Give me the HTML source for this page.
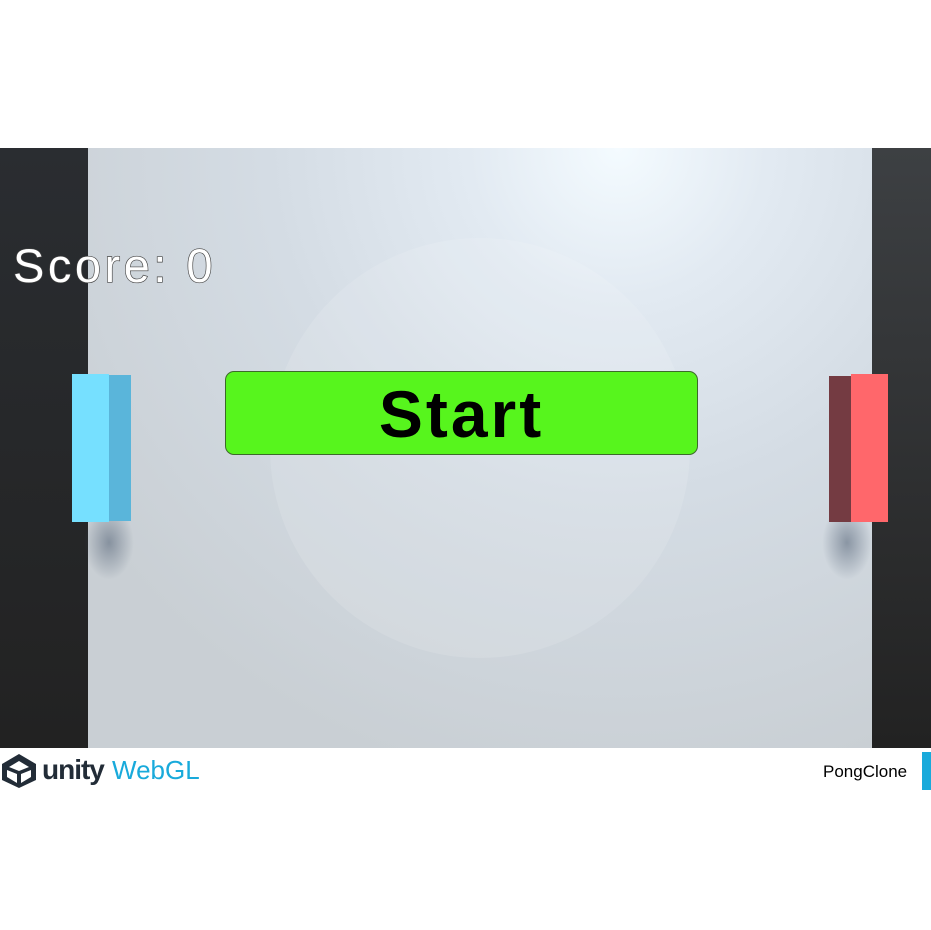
<!DOCTYPE html>
<html><head><style>
body{margin:0;width:931px;height:930px;background:#fff;position:relative;overflow:hidden;font-family:"Liberation Sans",sans-serif}
.a{position:absolute}
</style></head><body>
<div class="a" style="left:0;top:148px;width:931px;height:600px;background:linear-gradient(#2a2d31,#222)"></div>
<div class="a" style="left:872px;top:148px;width:59px;height:600px;background:linear-gradient(#3d4043,#222)"></div>
<div class="a" style="left:88px;top:148px;width:784px;height:600px;background:radial-gradient(circle at 530px 0px,#f4fbff 0,#e2eaf2 150px,#d4dce4 350px,#c9cfd4 650px)"></div>
<div class="a" style="left:270px;top:238px;width:420px;height:420px;border-radius:50%;background:rgba(255,255,255,0.12)"></div>
<div class="a" style="left:13px;top:238px;font-size:47px;color:#fff;letter-spacing:3.5px;-webkit-text-stroke:1.3px #444;paint-order:stroke fill">Score: 0</div>
<div class="a" style="left:84px;top:505px;width:50px;height:75px;background:radial-gradient(ellipse,rgba(80,95,115,0.55),transparent 70%)"></div>
<div class="a" style="left:72px;top:374px;width:37px;height:148px;background:#76e0ff"></div>
<div class="a" style="left:109px;top:375px;width:22px;height:146px;background:#5ab5da"></div>
<div class="a" style="left:822px;top:505px;width:50px;height:75px;background:radial-gradient(ellipse,rgba(80,95,115,0.55),transparent 70%)"></div>
<div class="a" style="left:829px;top:376px;width:22px;height:146px;background:#743b42"></div>
<div class="a" style="left:851px;top:374px;width:37px;height:148px;background:#ff676b"></div>
<div class="a" style="left:225px;top:371px;width:471px;height:82px;background:#57f51d;border:1.5px solid #3c6a2a;border-radius:9px;text-align:center;line-height:84px;font-size:66px;font-weight:bold;color:#000;letter-spacing:3px">Start</div>
<svg class="a" style="left:0;top:752px" width="38" height="38" viewBox="0 0 38 38"><path d="M19 2 L36 12 V28 L19 36 L2 28 V12 Z M19 9 L9 15 L19 19 L29 15 Z M7 18 V25 L17 31 V22 Z M31 18 V25 L21 31 V22 Z" fill="#222c37" fill-rule="evenodd"/></svg>
<div class="a" style="left:42px;top:754px;font-size:28px;font-weight:bold;color:#222c37;letter-spacing:-1px">unity</div>
<div class="a" style="left:112px;top:755px;font-size:26px;color:#19aadb">WebGL</div>
<div class="a" style="left:823px;top:762px;font-size:17px;color:#000">PongClone</div>
<div class="a" style="left:922px;top:752px;width:9px;height:38px;background:#19aadb"></div>
</body></html>
